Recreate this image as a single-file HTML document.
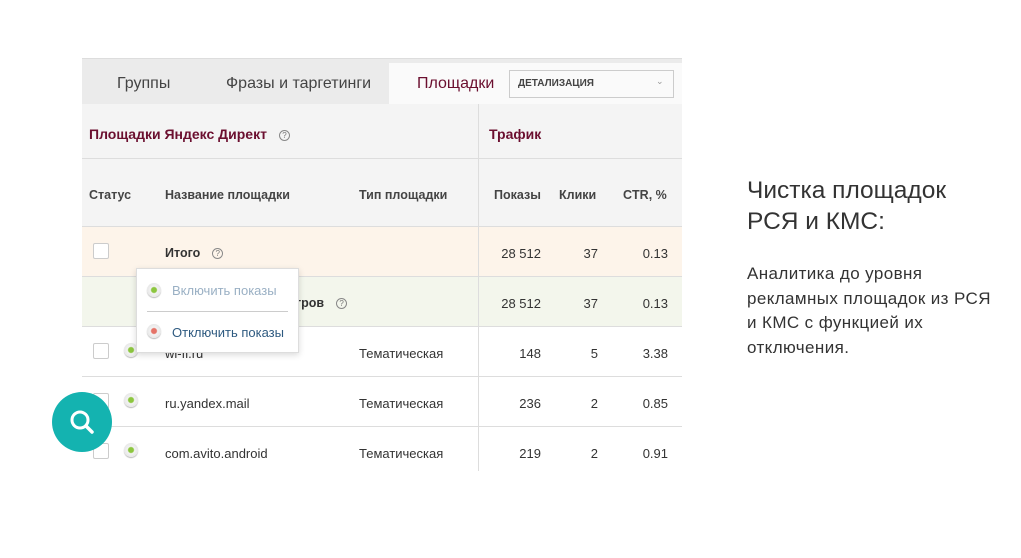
<!DOCTYPE html><html><head><meta charset="utf-8"><style>
body{margin:0;width:1021px;height:558px;background:#fff;font-family:"Liberation Sans","DejaVu Sans",sans-serif;position:relative;overflow:hidden;color:#333}
.a{position:absolute;white-space:nowrap}
.h{font-size:12.5px;font-weight:bold;color:#444}
.c{font-size:13px;color:#333}
.r{text-align:right}
.cb{position:absolute;width:14px;height:14px;border:1px solid #ccc;background:#fff;border-radius:2px}
.dot{position:absolute;width:14px;height:14px;border-radius:50%;background:radial-gradient(circle,#8cc63f 0 2.5px,#f3f3f3 3.5px,#ddd 100%);box-shadow:0 1px 1px #bbb}
.q{display:inline-block;width:9px;height:9px;border:1px solid #888;border-radius:50%;font-size:8px;line-height:9px;text-align:center;color:#777;font-weight:normal;margin-left:12px;vertical-align:1px}
.hl{position:absolute;left:82px;width:600px;height:1px;background:#ddd}
</style></head><body>
<div class="a" style="left:82px;top:58px;width:600px;height:46px;background:#ebebeb;border-top:1px solid #ddd"></div>
<div class="a" style="left:389px;top:63px;width:293px;height:42px;background:#fafafa"></div>
<div class="a" style="left:117px;top:75px;font-size:16px;color:#444">Группы</div>
<div class="a" style="left:226px;top:75px;font-size:16px;color:#444">Фразы и таргетинги</div>
<div class="a" style="left:417px;top:75px;font-size:16px;color:#6b0f2f">Площадки</div>
<div class="a" style="left:509px;top:70px;width:163px;height:26px;border:1px solid #ccc;background:#fafafa"></div>
<div class="a" style="left:518px;top:78px;font-size:10px;font-weight:bold;color:#444">ДЕТАЛИЗАЦИЯ</div>
<div class="a" style="left:656px;top:76px;font-size:9px;color:#999">⌄</div>
<div class="a" style="left:82px;top:104px;width:600px;height:122px;background:#f4f4f4"></div>
<div class="a" style="left:82px;top:227px;width:600px;height:49px;background:#fdf4ea"></div>
<div class="a" style="left:82px;top:277px;width:600px;height:49px;background:#f3f6ec"></div>
<div class="hl" style="top:158px"></div><div class="hl" style="top:226px"></div><div class="hl" style="top:276px"></div><div class="hl" style="top:326px"></div><div class="hl" style="top:376px"></div><div class="hl" style="top:426px"></div>
<div class="a" style="left:478px;top:104px;width:1px;height:367px;background:#ddd"></div>
<div class="a" style="left:89px;top:126px;font-size:14px;font-weight:bold;color:#6b0f2f">Площадки Яндекс Директ<span class="q">?</span></div>
<div class="a" style="left:489px;top:126px;font-size:14px;font-weight:bold;color:#6b0f2f">Трафик</div>
<div class="a h" style="left:89px;top:188px">Статус</div>
<div class="a h" style="left:165px;top:188px">Название площадки</div>
<div class="a h" style="left:359px;top:188px">Тип площадки</div>
<div class="a h" style="left:494px;top:188px">Показы</div>
<div class="a h" style="left:559px;top:188px">Клики</div>
<div class="a h" style="left:623px;top:188px">CTR, %</div>
<div class="cb" style="left:93px;top:243px"></div>
<div class="a h" style="left:165px;top:246px;color:#333">Итого<span class="q">?</span></div>
<div class="a h" style="left:295px;top:296px;color:#333">тров<span class="q">?</span></div>
<div class="a c r" style="left:480px;width:61px;top:246px">28 512</div><div class="a c r" style="left:550px;width:48px;top:246px">37</div><div class="a c r" style="left:610px;width:58px;top:246px">0.13</div>
<div class="a c r" style="left:480px;width:61px;top:296px">28 512</div><div class="a c r" style="left:550px;width:48px;top:296px">37</div><div class="a c r" style="left:610px;width:58px;top:296px">0.13</div>
<div class="cb" style="left:93px;top:343px"></div><div class="dot" style="left:124px;top:343px"></div>
<div class="a c" style="left:165px;top:346px">wi-fi.ru</div><div class="a c" style="left:359px;top:346px">Тематическая</div>
<div class="a c r" style="left:480px;width:61px;top:346px">148</div><div class="a c r" style="left:550px;width:48px;top:346px">5</div><div class="a c r" style="left:610px;width:58px;top:346px">3.38</div>
<div class="cb" style="left:93px;top:393px"></div><div class="dot" style="left:124px;top:393px"></div>
<div class="a c" style="left:165px;top:396px">ru.yandex.mail</div><div class="a c" style="left:359px;top:396px">Тематическая</div>
<div class="a c r" style="left:480px;width:61px;top:396px">236</div><div class="a c r" style="left:550px;width:48px;top:396px">2</div><div class="a c r" style="left:610px;width:58px;top:396px">0.85</div>
<div class="cb" style="left:93px;top:443px"></div><div class="dot" style="left:124px;top:443px"></div>
<div class="a c" style="left:165px;top:446px">com.avito.android</div><div class="a c" style="left:359px;top:446px">Тематическая</div>
<div class="a c r" style="left:480px;width:61px;top:446px">219</div><div class="a c r" style="left:550px;width:48px;top:446px">2</div><div class="a c r" style="left:610px;width:58px;top:446px">0.91</div>
<div class="a" style="left:136px;top:268px;width:161px;height:83px;background:#fff;border:1px solid #ddd;box-shadow:0 2px 6px rgba(0,0,0,.15)"></div>
<div class="dot" style="left:147px;top:283px"></div>
<div class="a" style="left:172px;top:283px;font-size:13px;color:#9ab0c4">Включить показы</div>
<div class="a" style="left:147px;top:311px;width:141px;height:1px;background:#ccc"></div>
<div class="dot" style="left:147px;top:324px;background:radial-gradient(circle,#e57368 0 2.5px,#f3f3f3 3.5px,#ddd 100%)"></div>
<div class="a" style="left:172px;top:325px;font-size:13px;color:#2e5a80">Отключить показы</div>
<div class="a" style="left:52px;top:392px;width:60px;height:60px;border-radius:50%;background:#14b3b0"></div>
<svg class="a" style="left:66px;top:406px" width="32" height="32" viewBox="0 0 32 32"><circle cx="14" cy="14" r="8" fill="none" stroke="#fff" stroke-width="3"/><path d="M20 20l6 6" stroke="#fff" stroke-width="3.5" stroke-linecap="round"/></svg>
<div class="a" style="left:747px;top:175px;font-size:24.5px;line-height:31px;color:#333">Чистка площадок<br>РСЯ и КМС:</div>
<div class="a" style="left:747px;top:262px;font-size:17px;letter-spacing:0.4px;line-height:24.5px;color:#333">Аналитика до уровня<br>рекламных площадок из РСЯ<br>и КМС с функцией их<br>отключения.</div>
</body></html>
